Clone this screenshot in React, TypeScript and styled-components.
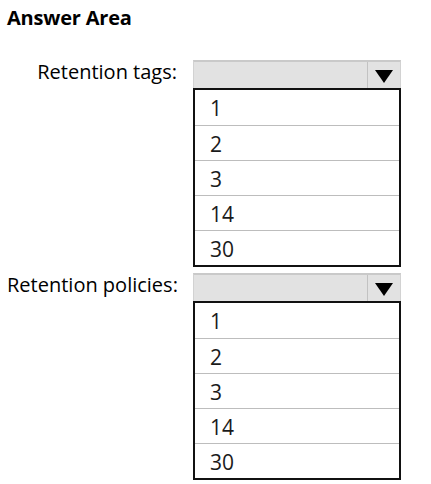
import React from 'react';
import styled, { createGlobalStyle } from 'styled-components';

const GlobalStyle = createGlobalStyle`
	html, body {
		margin: 0;
		padding: 0;
		background: #ffffff;
	}
	body {
		font-family: 'Open Sans', 'Liberation Sans', sans-serif;
		color: #000000;
	}
`;

const options = ['1', '2', '3', '14', '30'];

const fields = ['Retention tags:', 'Retention policies:'];

type DropdownProps = { items: string[] };

function Dropdown({ items }: DropdownProps) {
	return (
		<DropdownWrapper>
			<SelectBar>
				<SelectValue />
				<ArrowCell>
					<svg width="18" height="13" viewBox="0 0 18 13">
						<polygon points="0,0 18,0 9,13" fill="#000" />
					</svg>
				</ArrowCell>
			</SelectBar>
			<OptionList>
				{items.map(item => (
					<OptionRow key={item}>{item}</OptionRow>
				))}
			</OptionList>
		</DropdownWrapper>
	);
}

function App() {
	return (
		<>
			<GlobalStyle />
			<Page>
				<Title>Answer Area</Title>
				<Form>
					{fields.map(field => (
						<FieldRow key={field}>
							<FieldLabel>{field}</FieldLabel>
							<Dropdown items={options} />
						</FieldRow>
					))}
				</Form>
			</Page>
		</>
	);
}

export default App;

const Page = styled.div`
	width: 431px;
	height: 484px;
	padding: 4px 0 0 7px;
	box-sizing: border-box;
	overflow: hidden;
`;

const Title = styled.h2`
	margin: 0;
	font-size: 20px;
	font-weight: 700;
	line-height: 28px;
	letter-spacing: -0.2px;
`;

const Form = styled.div`
	display: flex;
	flex-direction: column;
	gap: 6px;
	margin-top: 28px;
`;

const FieldRow = styled.div`
	display: grid;
	grid-template-columns: 170px 208px;
	column-gap: 16px;
	align-items: start;
`;

const FieldLabel = styled.div`
	font-size: 20px;
	line-height: 28px;
	text-align: right;
	margin-top: -2px;
	white-space: nowrap;
`;

const DropdownWrapper = styled.div`
	display: flex;
	flex-direction: column;
`;

const SelectBar = styled.div`
	display: flex;
	height: 28px;
	box-sizing: border-box;
	background: #e2e2e2;
	border-top: 2px solid #c9c9c9;
	border-left: 1px solid #d2d2d2;
	border-right: 1px solid #d2d2d2;
`;

const SelectValue = styled.div`
	flex: 1;
`;

const ArrowCell = styled.div`
	width: 33px;
	display: flex;
	align-items: center;
	justify-content: center;
	border-left: 1px solid #c2c2c2;
	padding-top: 2px;
	box-sizing: border-box;
`;

const OptionList = styled.div`
	border: 2px solid #111111;
	display: flex;
	flex-direction: column;
`;

const OptionRow = styled.div`
	height: 35px;
	box-sizing: border-box;
	padding: 3px 0 0 15px;
	font-size: 21px;
	line-height: 30px;
	color: #1a1a1a;

	& + & {
		border-top: 1px solid #bdbdbd;
	}
`;
